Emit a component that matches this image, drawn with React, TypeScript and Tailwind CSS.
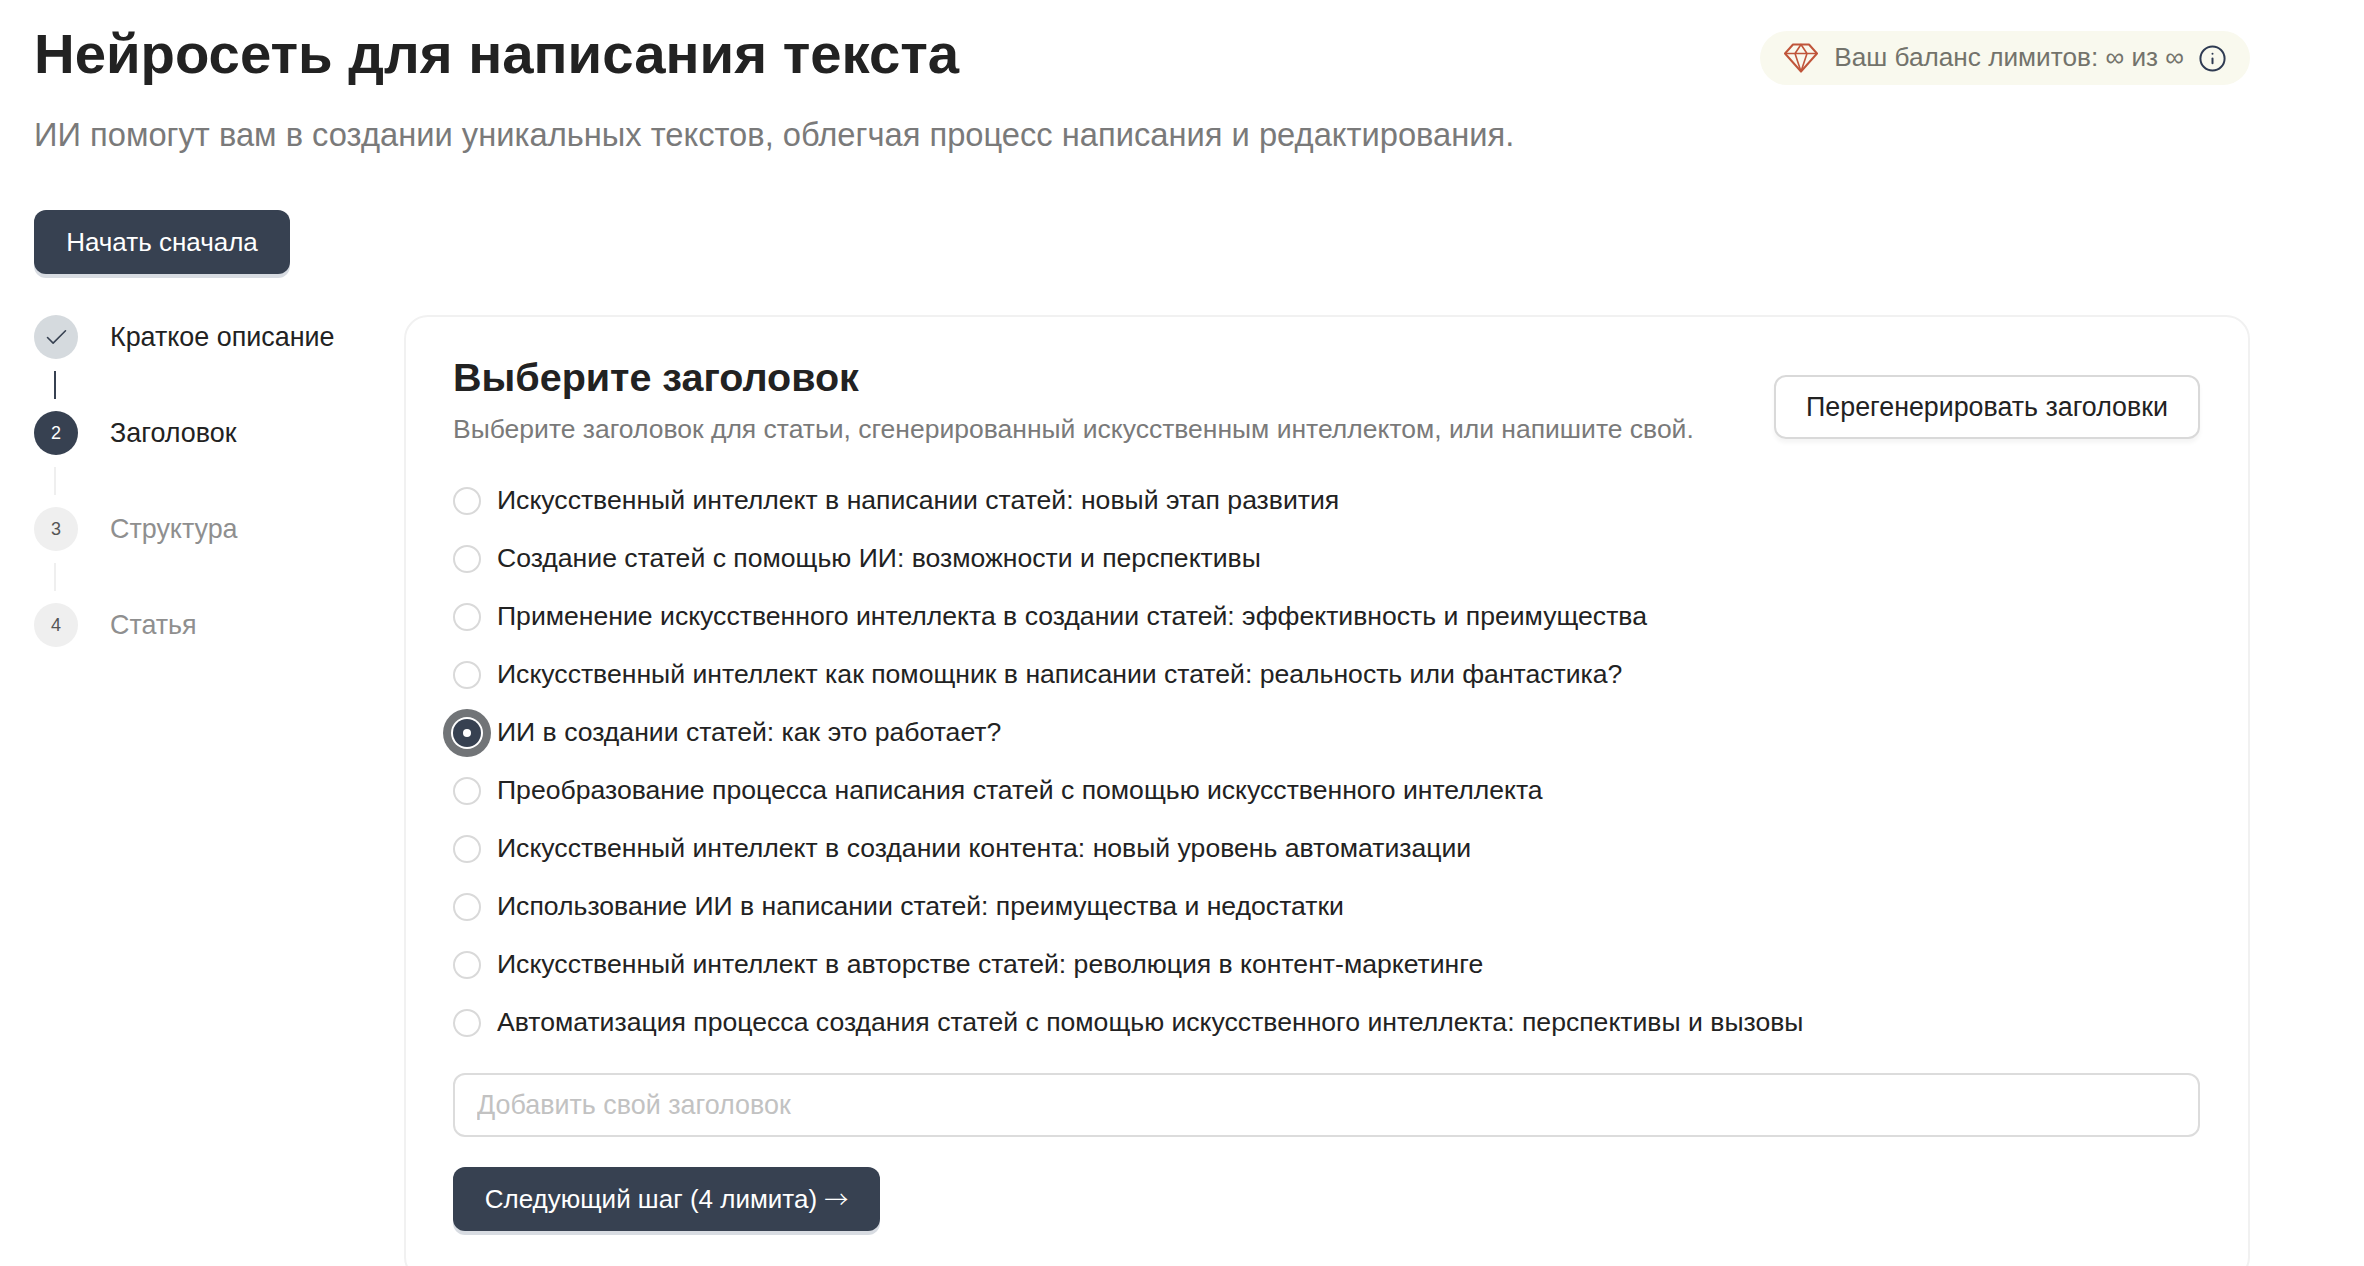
import React from 'react';
import { Check, Info } from 'lucide-react';

const titles = [
  'Искусственный интеллект в написании статей: новый этап развития',
  'Создание статей с помощью ИИ: возможности и перспективы',
  'Применение искусственного интеллекта в создании статей: эффективность и преимущества',
  'Искусственный интеллект как помощник в написании статей: реальность или фантастика?',
  'ИИ в создании статей: как это работает?',
  'Преобразование процесса написания статей с помощью искусственного интеллекта',
  'Искусственный интеллект в создании контента: новый уровень автоматизации',
  'Использование ИИ в написании статей: преимущества и недостатки',
  'Искусственный интеллект в авторстве статей: революция в контент-маркетинге',
  'Автоматизация процесса создания статей с помощью искусственного интеллекта: перспективы и вызовы',
];

const SELECTED = 4;

const Diamond = () => (
  <svg width="34" height="30" viewBox="0 0 34 30" fill="none" stroke="#c0553a" strokeWidth="2" strokeLinejoin="round">
    <path d="M9 1.5h16l8 9L17 28.5 1 10.5z" />
    <path d="M1 10.5h32M17 1.5l-6 9 6 18 6-18z" strokeWidth="1.6" />
  </svg>
);

const Step = ({ n, label, state }: { n: number; label: string; state: 'done' | 'active' | 'todo' }) => (
  <div className="flex items-center h-[44px]">
    <div
      className={`w-[44px] h-[44px] rounded-full flex items-center justify-center text-[18px] ${
        state === 'done' ? 'bg-[#d5dade] text-[#374151]' : state === 'active' ? 'bg-[#374151] text-white' : 'bg-[#efefef] text-[#555555]'
      }`}
    >
      {state === 'done' ? <Check size={27} strokeWidth={1.4} /> : n}
    </div>
    <span className={`ml-[32px] text-[26.9px] ${state === 'todo' ? 'text-[#8f8f8f]' : 'text-[#222222]'}`}>{label}</span>
  </div>
);

const Connector = ({ dark }: { dark?: boolean }) => (
  <div className={`ml-[20px] my-[12px] w-[2px] h-[28px] ${dark ? 'bg-[#374151]' : 'bg-[#efefef]'}`} />
);

export default function App() {
  return (
    <div className="h-[1266px] overflow-hidden bg-white pl-[34px] w-[2250px] font-['Liberation_Sans',sans-serif] text-[#222222]">
      <div className="flex justify-between items-start pt-[23px]">
        <h1 className="text-[56.3px] leading-[62px] font-bold">Нейросеть для написания текста</h1>
        <div className="flex items-center h-[54px] mt-[8px] pl-[24px] pr-[23px] rounded-full bg-[#f9f9ee] text-[26.2px] text-[#73736b]">
          <Diamond />
          <span className="ml-[16px]">Ваш баланс лимитов: ∞ из ∞</span>
          <Info size={29} strokeWidth={1.65} className="ml-[14px] text-[#2f3b52]" />
        </div>
      </div>
      <p className="mt-[30px] text-[32.7px] leading-[40px] text-[#7a7a7a]">
        ИИ помогут вам в создании уникальных текстов, облегчая процесс написания и редактирования.
      </p>
      <button className="block mt-[55px] w-[256px] h-[64px] rounded-[12px] bg-[#374151] text-white text-[26px] shadow-[0_4px_0_0_#d8dce2]">
        Начать сначала
      </button>
      <div className="flex mt-[41px] items-start">
        <div className="w-[370px] shrink-0">
          <Step n={1} label="Краткое описание" state="done" />
          <Connector dark />
          <Step n={2} label="Заголовок" state="active" />
          <Connector />
          <Step n={3} label="Структура" state="todo" />
          <Connector />
          <Step n={4} label="Статья" state="todo" />
        </div>
        <div className="flex-1 border-2 border-[#f1f1f1] rounded-[24px] pt-[36px] pl-[47px] pr-[48px] pb-[48px]">
          <div className="flex justify-between items-start">
            <div>
              <h2 className="text-[39.5px] leading-[48px] font-bold">Выберите заголовок</h2>
              <p className="mt-[12px] text-[26.5px] leading-[32px] text-[#7a7a7a]">
                Выберите заголовок для статьи, сгенерированный искусственным интеллектом, или напишите свой.
              </p>
            </div>
            <button className="mt-[22px] w-[426px] h-[64px] rounded-[12px] border-2 border-[#d9d9d9] bg-white text-[26.8px] shadow-[0_4px_4px_0_#f5f5f5]">
              Перегенерировать заголовки
            </button>
          </div>
          <div className="mt-[27px] flex flex-col">
            {titles.map((t, i) => (
              <label key={t} className="flex items-center h-[58px] text-[26.6px]">
                {i === SELECTED ? (
                  <span className="w-[28px] h-[28px] rounded-full bg-[#374151] flex items-center justify-center shadow-[0_0_0_2px_#ffffff,0_0_0_10px_#717477]">
                    <span className="w-[8px] h-[8px] rounded-full bg-white" />
                  </span>
                ) : (
                  <span className="w-[28px] h-[28px] rounded-full border-2 border-[#d9d9d9]" />
                )}
                <span className="ml-[16px]">{t}</span>
              </label>
            ))}
          </div>
          <input
            placeholder="Добавить свой заголовок"
            className="block mt-[21px] w-full h-[64px] px-[22px] rounded-[12px] border-2 border-[#dcdcdc] text-[26.9px] placeholder:text-[#c2c2c2]"
          />
          <button className="block mt-[30px] w-[427px] h-[64px] rounded-[12px] bg-[#374151] text-white text-[26px] shadow-[0_4px_0_0_#d8dce2]">
            Следующий шаг (4 лимита) <span className="font-['Noto_Sans_CJK_JP',sans-serif] text-[24px] font-light">→</span>
          </button>
        </div>
      </div>
    </div>
  );
}
